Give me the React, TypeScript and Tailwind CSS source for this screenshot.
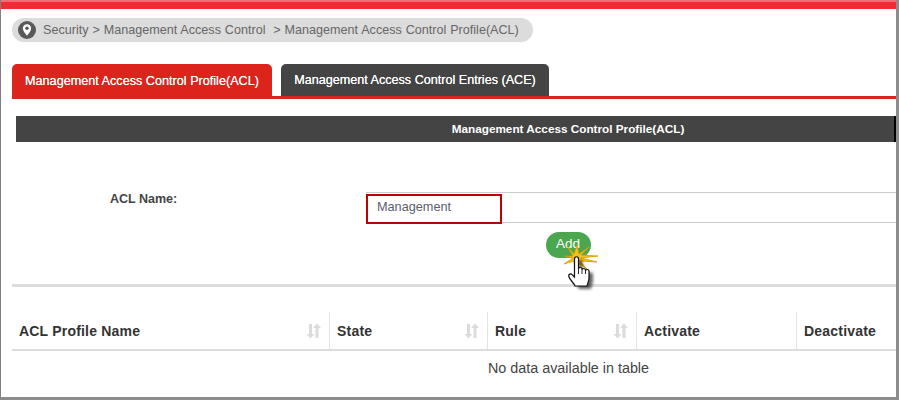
const COLUMNS = [
  { label: 'ACL Profile Name', width: 'w-[318px]', sort: true },
  { label: 'State', width: 'w-[158px]', sort: true },
  { label: 'Rule', width: 'w-[149px]', sort: true },
  { label: 'Activate', width: 'w-[160px]', sort: false },
  { label: 'Deactivate', width: 'flex-1', sort: false },
];

function SortIcon() {
  return (
    <svg width="15" height="16" viewBox="0 0 15 16" className="shrink-0">
      <path d="M3 1h3v10h2.5L4.5 15.5.5 11H3z" fill="#dcdcdc" />
      <path d="M9.5 15h3V5H15L11 .5 7 5h2.5z" fill="#dcdcdc" />
    </svg>
  );
}

function PinIcon() {
  return (
    <svg width="18" height="18" viewBox="0 0 18 18" className="shrink-0">
      <circle cx="9" cy="9" r="9" fill="#595959" />
      <path d="M9 3.2c-2.5 0-4.2 1.8-4.2 4.1 0 2.6 2.7 5.4 4.2 7.5 1.5-2.1 4.2-4.9 4.2-7.5 0-2.3-1.7-4.1-4.2-4.1z" fill="#ffffff" />
      <circle cx="9" cy="7.3" r="1.7" fill="#595959" />
    </svg>
  );
}

function ClickCursor() {
  return (
    <svg width="60" height="64" viewBox="0 0 60 64" className="absolute left-[559px] top-[244px]">
      <defs>
        <filter id="handShadow" x="-50%" y="-50%" width="200%" height="200%">
          <feGaussianBlur stdDeviation="1.8" />
        </filter>
      </defs>
      <polygon
        points="7,2 14,10 17,1 19,10 29,3 21,11 38,12 21,14 37,18 20,17 27,25 17,18 15,27 14,17 4,20 13,14 5,12 13,12"
        fill="#f2c21a"
        stroke="#d99a00"
        strokeWidth="0.8"
      />
      <path
        d="M14.5 15c0-3 4-3 4 0v10c0-2 3.500-2 3.500 0v1c0-2 3.500-2 3.500 0v1c0-2 3.500-2 3.500 0v7c0 3-1.500 5-2 8H15c-1-3-5-6-6-9-1-3 2-4 3.500-2l2 2z"
        fill="#000"
        opacity="0.6"
        filter="url(#handShadow)"
        transform="translate(4 3)"
      />
      <path
        d="M14.5 15c0-3 4-3 4 0v10c0-2 3.500-2 3.500 0v1c0-2 3.500-2 3.500 0v1c0-2 3.500-2 3.500 0v7c0 3-1.500 5-2 8H15c-1-3-5-6-6-9-1-3 2-4 3.500-2l2 2z"
        fill="#fff"
        stroke="#111"
        strokeWidth="1.2"
      />
      <path d="M18.500 25v5M22 26v4M25.500 27v3" stroke="#111" strokeWidth="0.9" fill="none" />
    </svg>
  );
}

export default function App() {
  return (
    <div className="relative w-[899px] h-[400px] overflow-hidden bg-white font-['Liberation_Sans',Arial,sans-serif] border-l border-l-[#808080] border-r-[3px] border-r-[#8c8c8c] border-b-[3px] border-b-[#8c8c8c]">
      {/* Top bar */}
      <div className="h-[9px] bg-[#f62a34] border-t-2 border-t-[#e8727a]" />

      <div className="pl-[11px]">
        {/* Breadcrumb */}
        <div className="mt-[9px] flex items-center w-[521px] h-[24px] rounded-full bg-[#dcdcdc] pl-[6px]">
          <PinIcon />
          <span className="ml-[7px] text-[12.6px] [word-spacing:0.4px] text-[#666666] whitespace-pre">
            {'Security > Management Access Control  > Management Access Control Profile(ACL)'}
          </span>
        </div>

        {/* Tabs */}
        <div className="mt-[22px] flex items-start gap-[9px] border-b-[3px] border-b-[#dc241c] h-[35px]">
          <div className="flex items-center justify-center w-[260px] h-[34px] rounded-t-[5px] bg-[#dc241c] text-[12.65px] text-white [text-shadow:0_0_0.4px_#fff]">
            Management Access Control Profile(ACL)
          </div>
          <div className="flex items-center justify-center w-[268px] h-[32px] rounded-t-[5px] bg-[#444444] text-[12.6px] text-white [text-shadow:0_0_0.4px_#fff]">
            Management Access Control Entries (ACE)
          </div>
        </div>

        {/* Section heading */}
        <div className="mt-[17px] ml-[4px] h-[26px] flex items-center justify-center pl-[226px] bg-[#444444] border-r-2 border-r-black text-[11.75px] font-bold text-white">
          Management Access Control Profile(ACL)
        </div>

        {/* Form */}
        <div className="mt-[50px] flex items-start h-[31px]">
          <label className="ml-[98px] w-[256px] text-[12.5px] font-bold text-[#444444] leading-[14px]">ACL Name:</label>
          <div className="relative flex-1 h-[31px] border-y border-y-[#cccccc]">
            <div className="absolute left-0 top-[1px] w-[136px] h-[30px] border-2 border-[#c00000]" />
            <span className="absolute left-[11px] top-[5px] text-[12.7px] text-[#5a6070]">Management</span>
          </div>
        </div>

        <div className="mt-[9px] flex justify-center pl-[228px]">
          <div className="flex items-center justify-center w-[45px] h-[26px] pb-[2px] rounded-full bg-[#4ca64f] text-[13.5px] text-white">Add</div>
        </div>

        <div className="mt-[26px] h-[3px] bg-[#dddddd]" />

        {/* Table */}
        <div className="mt-[25px] flex h-[39px] border-b-2 border-b-[#dddddd]">
          {COLUMNS.map((c, i) => (
            <div
              key={c.label}
              className={`${c.width} flex items-center justify-between pl-[7px] pr-[8px] pt-[1px] ${i < 4 ? 'border-r border-r-[#e3e3e3]' : ''}`}
            >
              <span className="text-[14px] font-bold text-[#333333] tracking-[0.2px]">{c.label}</span>
              {c.sort && <SortIcon />}
            </div>
          ))}
        </div>
        <p className="mt-[7px] pl-[229px] text-center text-[14.35px] text-[#444444]">No data available in table</p>
      </div>

      <ClickCursor />
    </div>
  );
}
